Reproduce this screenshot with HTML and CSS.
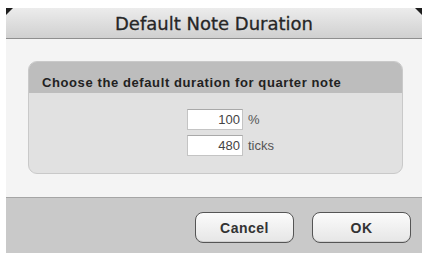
FILE: index.html
```html
<!DOCTYPE html>
<html>
<head>
<meta charset="utf-8">
<link rel="stylesheet" href="styles.css">
</head>
<body>
<div class="window">
  <div class="titlebar">Default Note Duration</div>
  <div class="content">
    <div class="group">
      <div class="group-head">Choose the default duration for quarter note</div>
      <div class="group-body">
        <div class="row"><div class="field">100</div><span class="unit">%</span></div>
        <div class="row"><div class="field">480</div><span class="unit">ticks</span></div>
      </div>
    </div>
  </div>
  <div class="buttonbar">
    <button class="btn">Cancel</button>
    <button class="btn">OK</button>
  </div>
</div>
</body>
</html>
```
FILE: styles.css
```css
html, body {
  margin: 0;
  padding: 0;
  background: #ffffff;
}
body {
  width: 426px;
  height: 253px;
  overflow: hidden;
  font-family: "Liberation Sans", Arial, sans-serif;
}
.window {
  position: relative;
  margin: 8px 0 0 6px;
  width: 416px;
  height: 245px;
  display: flex;
  flex-direction: column;
  background: #f4f4f4;
}
.titlebar {
  position: relative;
  height: 31px;
  box-sizing: border-box;
  border-bottom: 1px solid #8f8f8f;
  background: linear-gradient(#ececec, #d0d0d0);
  font-family: "DejaVu Sans", sans-serif;
  font-size: 18px;
  color: #262626;
  text-align: center;
  line-height: 31px;
  -webkit-text-stroke: 0.3px #262626;
}
.titlebar::before,
.titlebar::after {
  content: "";
  position: absolute;
  top: 0;
  width: 7px;
  height: 7px;
  background: #1e1e1e;
}
.titlebar::before {
  left: 0;
  clip-path: polygon(0 0, 100% 0, 0 100%);
}
.titlebar::after {
  right: 0;
  clip-path: polygon(0 0, 100% 0, 100% 100%);
}
.content {
  height: 158px;
  box-sizing: border-box;
  padding: 22px 19px 0 22px;
  background: #f4f4f4;
}
.group {
  border-radius: 9px;
  overflow: hidden;
  border: 1px solid #c9c9c9;
  background: #e1e1e1;
}
.group-head {
  height: 31px;
  box-sizing: border-box;
  background: #bdbdbd;
  font-weight: bold;
  font-size: 13px;
  letter-spacing: 0.6px;
  color: #222;
  line-height: 16px;
  padding: 13px 0 0 13px;
}
.group-body {
  height: 80px;
  box-sizing: border-box;
  padding: 16px 0 0 158px;
  display: flex;
  flex-direction: column;
  gap: 5px;
}
.row {
  display: flex;
  align-items: center;
  gap: 5px;
}
.field {
  width: 56px;
  height: 21px;
  box-sizing: border-box;
  background: #fff;
  border: 1px solid #c4c4c4;
  border-top-color: #a9a9a9;
  text-align: right;
  padding-right: 2px;
  font-size: 13px;
  line-height: 20px;
  color: #444;
}
.unit {
  font-size: 13px;
  color: #555;
}
.buttonbar {
  flex: 1;
  box-sizing: border-box;
  border-top: 1px solid #a5a5a5;
  background: #c9c9c9;
  display: flex;
  justify-content: flex-end;
  align-items: flex-start;
  gap: 18px;
  padding: 14px 11px 0 0;
}
.btn {
  width: 99px;
  height: 31px;
  border: 1px solid #555;
  border-radius: 8px;
  background: linear-gradient(#fbfbfb, #e6e6e6);
  font-family: "Liberation Sans", Arial, sans-serif;
  font-weight: bold;
  font-size: 14px;
  letter-spacing: 0.5px;
  color: #333;
  padding: 0;
  box-shadow: inset 0 -1px 0 #d0d0d0;
}
```
